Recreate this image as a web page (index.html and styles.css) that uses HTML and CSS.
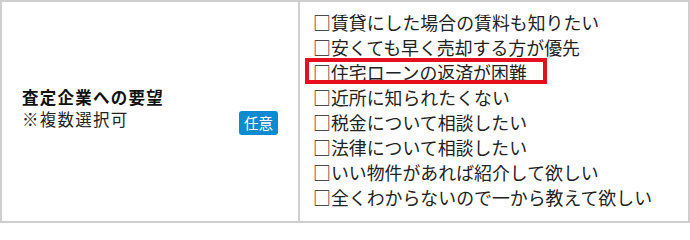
FILE: index.html
```html
<!DOCTYPE html>
<html lang="ja">
<head>
<meta charset="utf-8">
<link rel="stylesheet" href="styles.css">
</head>
<body>
<div class="form-row">
  <div class="label-cell">
    <div class="label-text">
      <div class="label-title">査定企業への要望</div>
      <div class="label-note">※複数選択可</div>
    </div>
    <span class="badge">任意</span>
  </div>
  <ul class="options">
    <li>□賃貸にした場合の賃料も知りたい</li>
    <li>□安くても早く売却する方が優先</li>
    <li><span class="highlight">□住宅ローンの返済が困難</span></li>
    <li>□近所に知られたくない</li>
    <li>□税金について相談したい</li>
    <li>□法律について相談したい</li>
    <li>□いい物件があれば紹介して欲しい</li>
    <li>□全くわからないので一から教えて欲しい</li>
  </ul>
</div>
</body>
</html>
```
FILE: styles.css
```css
html, body {
  margin: 0;
  padding: 0;
  background: #fff;
}
body {
  font-family: "Noto Sans CJK JP", "Noto Sans", sans-serif;
  color: #222;
}
.form-row {
  width: 690px;
  height: 223px;
  box-sizing: border-box;
  border: 2px solid #cfcfcf;
  display: grid;
  grid-template-columns: 298px 1fr;
}
.label-cell {
  border-right: 2px solid #cfcfcf;
  display: flex;
  justify-content: space-between;
  align-items: center;
  padding: 0 20px;
}
.label-text {
  margin-bottom: 8px;
  font-size: 16.5px;
  letter-spacing: 1.25px;
  line-height: 22px;
  white-space: nowrap;
}
.label-title {
  font-weight: bold;
  color: #111;
}
.label-note {
  color: #222;
}
.badge {
  margin-top: 23px;
  height: 24px;
  line-height: 24px;
  padding: 0 5px;
  font-size: 14.5px;
  color: #fff;
  background: #0d8bd0;
  border-radius: 3px;
}
.options {
  list-style: none;
  margin: 0;
  padding: 8px 0 11px 13px;
  font-size: 17.9px;
  line-height: 25px;
  white-space: nowrap;
}
.highlight {
  position: relative;
  display: inline-block;
}
.highlight::after {
  content: "";
  position: absolute;
  left: -8px;
  top: -2px;
  width: 242px;
  height: 26px;
  box-sizing: border-box;
  border: 4px solid #e60f1e;
}
```
